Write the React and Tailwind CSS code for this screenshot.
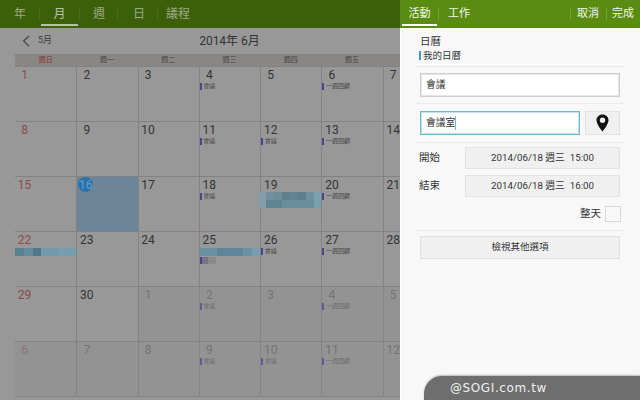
import React from 'react';

const FONT = "font-[Roboto,'Noto_Sans_CJK_TC',sans-serif]";

const weekdays = ['週日', '週一', '週二', '週三', '週四', '週五', '週六'];

// m = 會議, r = 一週回顧
const weeks = [
  [[1], [2], [3], [4, 'm'], [5], [6, 'r'], [7]],
  [[8], [9], [10], [11, 'm'], [12, 'm'], [13, 'r'], [14]],
  [[15], [16, 'today'], [17], [18, 'm'], [19, 'mosaicTall'], [20, 'r'], [21]],
  [[22, 'mosaicBar'], [23], [24], [25, 'mosaicDouble'], [26, 'm'], [27, 'r'], [28]],
  [[29], [30], [1, 'x'], [2, 'm', 'x'], [3, 'x'], [4, 'r', 'x'], [5, 'x']],
  [[6, 'x'], [7, 'x'], [8, 'x'], [9, 'm', 'x'], [10, 'm', 'x'], [11, 'r', 'x'], [12, 'x']],
];

const Event = ({ label, dim }) => (
  <div className="flex h-[6px] items-center gap-[1.5px]">
    <span className={`h-[7px] w-[2px] shrink-0 ${dim ? 'bg-[#5c5c9c]' : 'bg-[#46468f]'}`} />
    <span className={`whitespace-nowrap text-[6px] leading-[6px] ${dim ? 'text-[#6b6b6b]' : 'text-[#444444]'}`}>{label}</span>
  </div>
);

const Mosaic = ({ colors, className }) => (
  <div className={`flex ${className}`}>
    {colors.map((c, i) => (
      <span key={i} className="h-full flex-1" style={{ backgroundColor: c }} />
    ))}
  </div>
);

const DayCell = ({ cell, col }) => {
  const [day, a, b] = cell;
  const other = a === 'x' || b === 'x';
  const kind = a === 'x' ? null : a;
  const isSun = col === 0;
  let numColor = 'text-[#333333]';
  if (isSun) numColor = other ? 'text-[#8c7272]' : 'text-[#8c4a4a]';
  else if (other) numColor = 'text-[#737373]';

  return (
    <div className={`relative min-h-0 min-w-0 border-t border-[#838383] ${col > 0 ? 'border-l' : ''} ${other ? 'bg-[#939393]' : ''} ${kind === 'today' ? 'bg-[#6d8599]' : ''}`}>
      {kind === 'today' ? (
        <div className="ml-[1px] flex h-[15px] w-[15px] items-center justify-center rounded-full bg-[#2a73ad] text-[12px] leading-none text-[#6d9cc0]">{day}</div>
      ) : (
        <div className={`ml-[1px] mt-[1px] h-[14px] w-[17px] text-center text-[12px] leading-[14px] ${numColor}`}>{day}</div>
      )}
      <div className="mt-[1px]">
        {kind === 'm' && <Event label="會議" dim={other} />}
        {kind === 'r' && <Event label="一週回顧" dim={other} />}
        {kind === 'mosaicBar' && (
          <Mosaic className="h-[8px]" colors={['#5a8092', '#668b9c', '#527689', '#729aaa', '#729aaa', '#769eae', '#769eae']} />
        )}
        {kind === 'mosaicTall' && (
          <div className="-ml-[3px] -mt-[1px] flex h-[16px] w-[64px] flex-col">
            <Mosaic className="h-[8px]" colors={['#869ca6', '#718f9c', '#6c8c9a', '#5f7f8e', '#648392', '#5f7f8e', '#6f909e', '#7aa0ae']} />
            <Mosaic className="h-[8px]" colors={['#869ca6', '#5e8494', '#5e8494', '#6a8e9d', '#6a8e9d', '#6a8e9d', '#6a8e9d', '#7aa0ae']} />
          </div>
        )}
        {kind === 'mosaicDouble' && (
          <div>
            <Mosaic className="h-[8px]" colors={['#6a90a2', '#6a90a2', '#618598', '#618598', '#618598', '#6a90a2', '#789eae']} />
            <div className="mt-[1px] flex h-[7px] w-[16px]">
              <span className="w-[2px] bg-[#46468f]" />
              <span className="w-[6px] bg-[#7a7586]" />
              <span className="w-[8px] bg-[#8a8a8a]" />
            </div>
          </div>
        )}
      </div>
    </div>
  );
};

const TabDivider = ({ className }) => <span className={`h-[12px] w-[1px] bg-[#4a6b1c] ${className}`} />;

const CalendarPane = () => (
  <div className="flex w-[400px] shrink-0 flex-col overflow-hidden bg-[#989898]">
    <div className="flex h-[28px] shrink-0 items-center bg-[#3c5f09] text-[12px] text-[#9aab85]">
      <span className="ml-[14px] w-[25px]">年</span>
      <TabDivider />
      <div className="relative ml-[1px] flex h-full w-[37px] items-center justify-center text-[#b8c5a7]">
        月
        <span className="absolute bottom-[2px] left-0 right-0 h-[2px] bg-[#b4c2a4]" />
      </div>
      <TabDivider className="ml-[1px]" />
      <span className="ml-[13px] w-[24px]">週</span>
      <TabDivider />
      <span className="ml-[15px] w-[24px]">日</span>
      <TabDivider />
      <span className="ml-[8px]">議程</span>
    </div>
    <div className="relative flex h-[26px] shrink-0 items-center justify-center">
      <div className="absolute left-[22px] flex items-center gap-[8px] text-[9px] text-[#3d3d3d]">
        <svg width="8" height="12" viewBox="0 0 8 12" fill="none" stroke="#444" strokeWidth="1.1">
          <path d="M7 1 L1.5 6 L7 11" />
        </svg>
        5月
      </div>
      <span className="ml-[59px] text-[12px] text-[#333333]">2014年 6月</span>
    </div>
    <div className="ml-[15px] grid h-[12px] w-[429px] shrink-0 grid-cols-7 border-t border-[#838383] bg-[#898684] text-center text-[7px] leading-[11px] text-[#444444]">
      {weekdays.map((d, i) => (
        <span key={d} className={i === 0 ? 'text-[#8f3030]' : ''}>{d}</span>
      ))}
    </div>
    <div className="ml-[15px] grid h-[331px] w-[429px] shrink-0 grid-cols-7 grid-rows-6 border-b border-[#838383]">
      {weeks.map((w, wi) => w.map((c, ci) => <DayCell key={`${wi}-${ci}`} cell={c} col={ci} />))}
    </div>
  </div>
);

const Divider = () => <div className="mx-[15px] h-[1px] bg-[#e9e9e9]" />;

const GreyButton = ({ children, className = '' }) => (
  <div className={`flex items-center justify-center border border-[#e2e2e2] bg-[#f0f0f0] text-[#333333] ${className}`}>{children}</div>
);

const EditPane = () => (
  <div className="relative flex w-[240px] shrink-0 flex-col bg-[#f8f8f8] shadow-[inset_1px_0_0_#ffffff]">
    <div className="flex h-[28px] shrink-0 items-center bg-[#5a8c12] text-[11px] text-[#f2f6ea]">
      <div className="relative ml-[2px] flex h-full w-[35px] items-center justify-center">
        活動
        <span className="absolute bottom-[2px] left-0 right-0 h-[2px] bg-white" />
      </div>
      <span className="ml-[1px] h-[12px] w-[1px] bg-[#76a03a]" />
      <span className="ml-[9px]">工作</span>
      <span className="ml-auto h-[12px] w-[1px] bg-[#76a03a]" />
      <span className="ml-[6px]">取消</span>
      <span className="ml-[7px] h-[12px] w-[1px] bg-[#76a03a]" />
      <span className="ml-[5px] mr-[6px]">完成</span>
    </div>

    <div className="h-[38px] shrink-0 pl-[20px] pt-[7px] text-[#333333]">
      <div className="text-[10.5px] leading-[14px]">日曆</div>
      <div className="-ml-[1px] flex items-center gap-[2px] text-[9.5px] leading-[13px]">
        <span className="h-[9px] w-[2px] bg-[#3b9ac4]" />
        <span className="whitespace-nowrap">我的日曆</span>
      </div>
    </div>
    <Divider />

    <div className="flex h-[36px] shrink-0 items-center px-[20px]">
      <div className="flex h-[24px] w-full items-center border border-[#cfcfcf] bg-white pl-[5px] text-[9.75px] text-[#333333] shadow-[inset_0_0_0_1px_#e6e6e6]">會議</div>
    </div>
    <Divider />

    <div className="flex h-[38px] shrink-0 items-center gap-[5px] px-[20px]">
      <div className="flex h-[24px] w-[160px] items-center border border-[#6cb9d0] bg-white pl-[5px] text-[9.75px] text-[#333333] shadow-[inset_0_0_0_1px_#c4e2ec]">
        會議室
        <span className="h-[14px] w-[1px] bg-[#6cb9d0]" />
      </div>
      <GreyButton className="h-[24px] w-[35px]">
        <svg width="13" height="18" viewBox="0 0 13 18">
          <path fillRule="evenodd" fill="#111" d="M6.5 0.5 C3 0.5 0.5 3 0.5 6.3 C0.5 10.5 6.5 17.5 6.5 17.5 C6.5 17.5 12.5 10.5 12.5 6.3 C12.5 3 10 0.5 6.5 0.5 Z M6.5 3.6 A2.7 2.7 0 1 1 6.5 9 A2.7 2.7 0 1 1 6.5 3.6 Z" />
        </svg>
      </GreyButton>
    </div>
    <Divider />

    <div className="mt-[4px] flex flex-col gap-[6px] pl-[19px] pr-[20px] text-[10.5px] text-[#333333]">
      <div className="flex items-center">
        <span className="w-[46px]">開始</span>
        <GreyButton className="h-[22px] flex-1 text-[9.75px] whitespace-pre">2014/06/18 週三  15:00</GreyButton>
      </div>
      <div className="flex items-center">
        <span className="w-[46px]">結束</span>
        <GreyButton className="h-[22px] flex-1 text-[9.75px] whitespace-pre">2014/06/18 週三  16:00</GreyButton>
      </div>
    </div>

    <div className="mt-[9px] flex h-[16px] shrink-0 items-center justify-end gap-[4px] pr-[19px] text-[10.5px] text-[#333333]">
      整天
      <span className="h-[16px] w-[16px] border border-[#d8d8d8] bg-[#f8f8f8]" />
    </div>

    <div className="mt-[8px]"><Divider /></div>

    <div className="mt-[5px] px-[20px]">
      <GreyButton className="h-[23px] w-full text-[9.5px]">檢視其他選項</GreyButton>
    </div>

    <div className="absolute bottom-0 right-0 flex h-[24px] w-[216px] items-center rounded-tl-[18px] bg-[#6e6e6e] pl-[26px] font-['DejaVu_Sans',sans-serif] text-[12px] tracking-[0.6px] text-[#f0f0f0] shadow-[0_-1px_2px_rgba(0,0,0,0.25)]">
      @SOGI.com.tw
    </div>
  </div>
);

export default function App() {
  return (
    <div className={`flex h-[400px] w-[640px] overflow-hidden ${FONT}`}>
      <CalendarPane />
      <EditPane />
    </div>
  );
}
